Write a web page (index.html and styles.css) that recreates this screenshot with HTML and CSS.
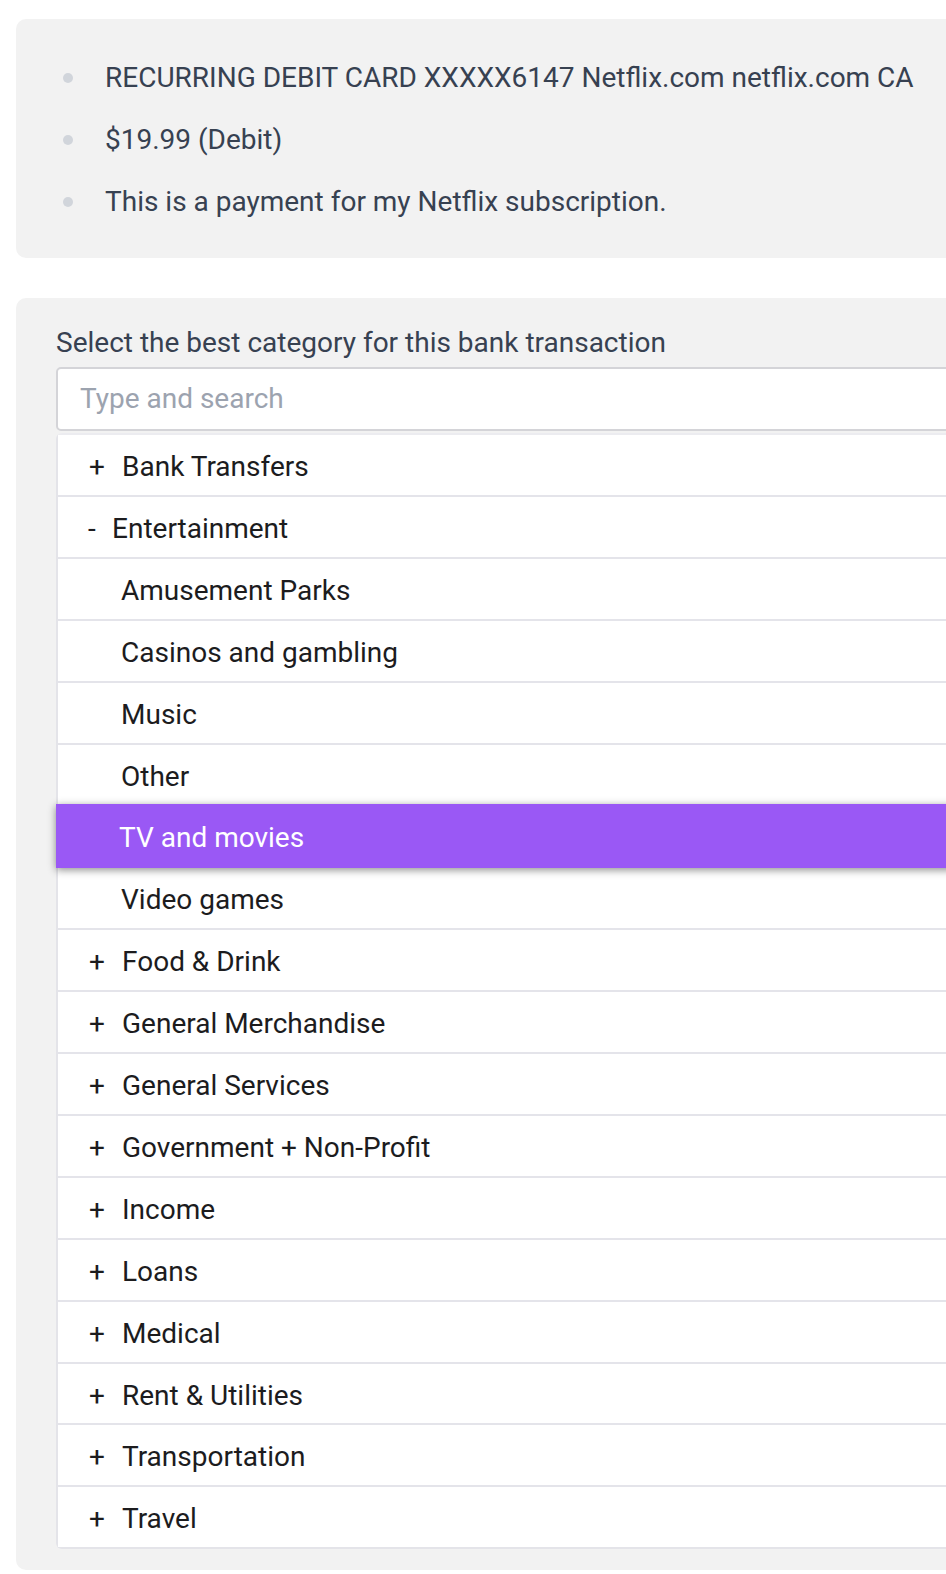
FILE: index.html
```html
<!DOCTYPE html>
<html>
<head>
<meta charset="utf-8">
<link rel="stylesheet" href="styles.css">
</head>
<body>
<div class="page">
  <section class="card info">
    <ul class="facts">
      <li>RECURRING DEBIT CARD XXXXX6147 Netflix.com netflix.com CA</li>
      <li>$19.99 (Debit)</li>
      <li>This is a payment for my Netflix subscription.</li>
    </ul>
  </section>
  <section class="card picker">
    <label class="prompt">Select the best category for this bank transaction</label>
    <div class="search">Type and search</div>
    <ul class="tree">
      <li class="row group"><span class="sign">+</span>Bank Transfers</li>
      <li class="row group open"><span class="sign">-</span>Entertainment</li>
      <li class="row child">Amusement Parks</li>
      <li class="row child">Casinos and gambling</li>
      <li class="row child">Music</li>
      <li class="row child">Other</li>
      <li class="row child selected">TV and movies</li>
      <li class="row child">Video games</li>
      <li class="row group"><span class="sign">+</span>Food &amp; Drink</li>
      <li class="row group"><span class="sign">+</span>General Merchandise</li>
      <li class="row group"><span class="sign">+</span>General Services</li>
      <li class="row group"><span class="sign">+</span>Government + Non-Profit</li>
      <li class="row group"><span class="sign">+</span>Income</li>
      <li class="row group"><span class="sign">+</span>Loans</li>
      <li class="row group"><span class="sign">+</span>Medical</li>
      <li class="row group"><span class="sign">+</span>Rent &amp; Utilities</li>
      <li class="row group"><span class="sign">+</span>Transportation</li>
      <li class="row group"><span class="sign">+</span>Travel</li>
    </ul>
  </section>
</div>
</body>
</html>
```

FILE: styles.css
```css
html, body {
  margin: 0;
  padding: 0;
  background: #ffffff;
  overflow: hidden;
}
body {
  font-family: Roboto, "Liberation Sans", sans-serif;
}
.page {
  width: 1100px;
  padding: 19px 0 0 16px;
  display: flex;
  flex-direction: column;
  gap: 40px;
}
.card {
  background: #f2f2f2;
  border-radius: 10px;
}
.info {
  height: 239px;
  box-sizing: border-box;
  padding-top: 42px;
}
.facts {
  list-style: none;
  margin: 0;
  padding: 0 0 0 89px;
  display: flex;
  flex-direction: column;
  gap: 28px;
  color: #374151;
  font-size: 28px;
  line-height: 34px;
}
.facts li {
  position: relative;
}
.facts li::before {
  content: "";
  position: absolute;
  left: -42px;
  top: 12px;
  width: 10px;
  height: 10px;
  border-radius: 50%;
  background: #d1d5db;
}
.picker {
  padding: 28px 0 21px 40px;
}
.prompt {
  display: block;
  color: #374151;
  font-size: 28px;
  line-height: 34px;
  margin-bottom: 7px;
}
.search {
  box-sizing: border-box;
  height: 64px;
  border: 2px solid #d4d4d8;
  border-radius: 5px;
  background: #fff;
  padding-left: 22px;
  color: #9ca3af;
  font-size: 28px;
  line-height: 60px;
}
.tree {
  list-style: none;
  margin: 2px 0 0 0;
  padding: 0;
  background: #fff;
  border: 2px solid #e4e4e9;
  border-right: none;
  border-radius: 6px 0 0 6px;
  border-top-color: #ececf0;
}
.row {
  box-sizing: border-box;
  height: 61.9px;
  border-top: 2px solid #e4e4ea;
  display: flex;
  align-items: center;
  font-size: 28px;
  color: #1c1c1e;
  background: #fff;
  padding-top: 3px;
}
.row:first-child {
  border-top: none;
  height: 60px;
}
.group {
  padding-left: 31px;
}
.sign {
  display: inline-block;
  width: 33px;
}
.open {
  padding-left: 30px;
}
.open .sign {
  width: 24px;
}
.child {
  padding-left: 63px;
}
.selected {
  position: relative;
  z-index: 1;
  background: #9a58f5;
  color: #fff;
  border-top: none;
  height: 64px;
  margin: 0 0 -2px -2px;
  box-shadow: 0 2px 8px rgba(0, 0, 0, 0.45);
}
```
